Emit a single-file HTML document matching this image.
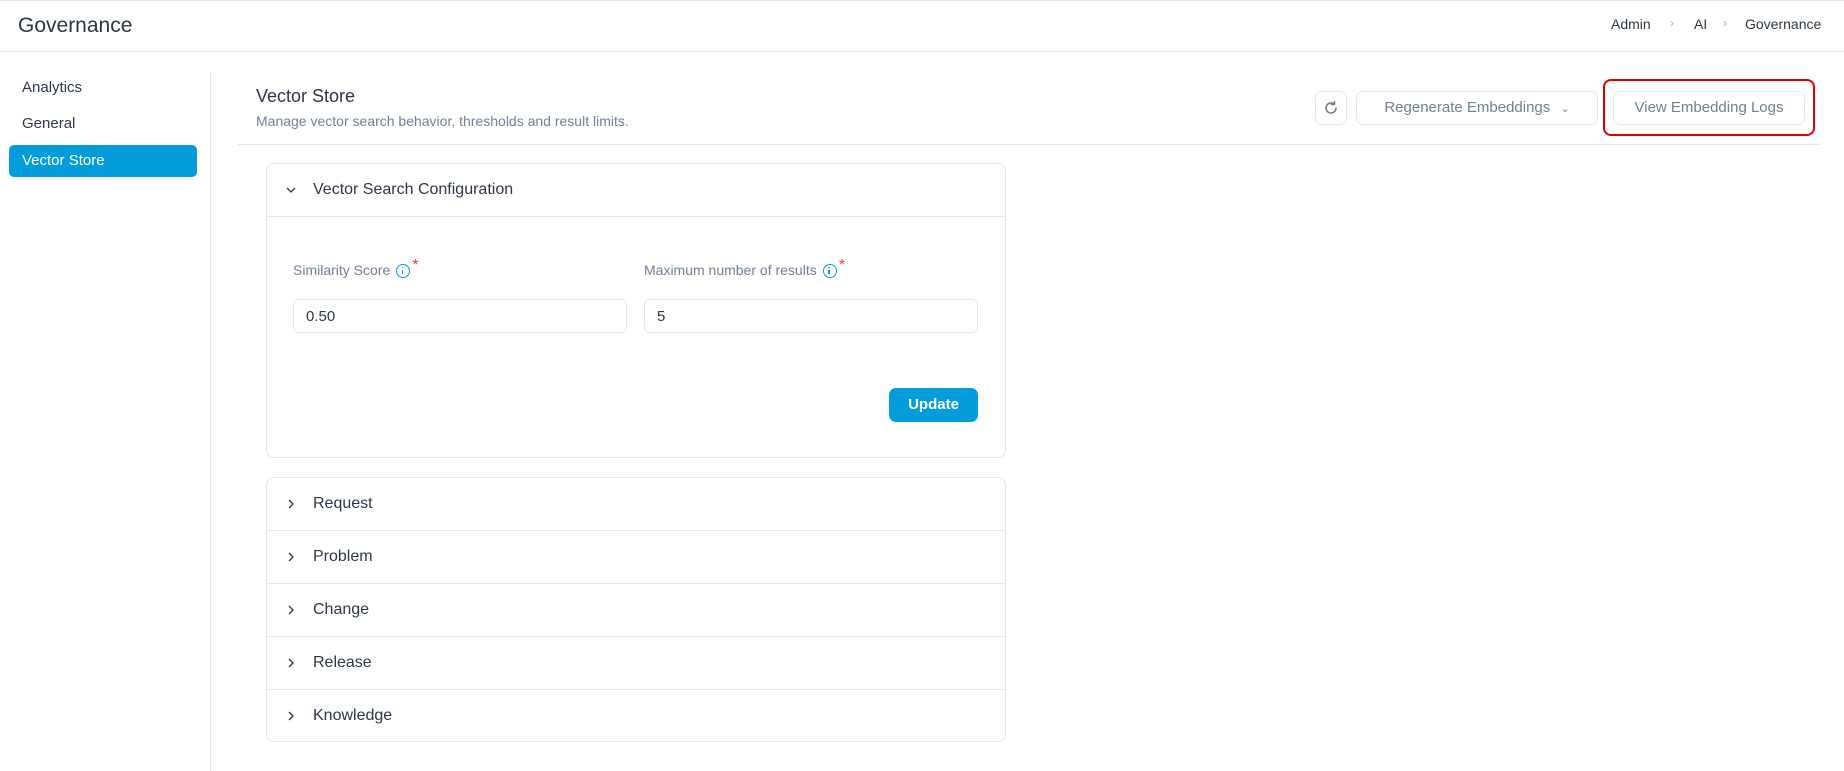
<!DOCTYPE html>
<html><head><meta charset="utf-8"><style>
*{box-sizing:border-box;margin:0;padding:0}
body{width:1844px;height:771px;background:#fff;font-family:"Liberation Sans",sans-serif;color:#2d3748;position:relative;overflow:hidden}
.a{position:absolute}
.hdr{left:0;top:0;width:1844px;height:52px;border-top:1px solid #e2e8f0;border-bottom:1px solid #e2e8f0}
.title{left:18px;top:14px;font-size:21px;color:#2d3748}
.bc{top:16px;font-size:14px;color:#2d3748}
.sep{top:16px;font-size:12px;color:#a0aec0}
.nav{left:22px;font-size:15px;color:#2d3748}
.navact{left:9px;top:145px;width:188px;height:32px;background:#039ddb;border-radius:5px;color:#fff;font-size:15px;padding:7px 0 0 13px}
.vline{left:210px;top:71px;width:1px;height:700px;background:#e2e8f0}
.btn{border:1px solid #e2e8f0;border-radius:7px;color:#718096;font-size:15px;text-align:center;line-height:32px;height:34px;top:91px}
.card{border:1px solid #e2e8f0;border-radius:8px}
.row{left:0;width:100%;height:53px;border-bottom:1px solid #e2e8f0;font-size:16px;color:#2d3748}
.row span{position:absolute;left:46px;top:17px}
.row svg{position:absolute;left:18px;top:20px}
.lbl{top:262px;font-size:14px;color:#718096}
.inp{top:299px;height:34px;border:1px solid #e2e8f0;border-radius:6px;font-size:15px;padding:8px 0 0 12px;color:#2d3748}
.info{display:inline-block;width:14px;height:14px;border:1.5px solid #039ddb;border-radius:50%;vertical-align:-3px;margin-left:6px;position:relative}
.info:after{content:"";position:absolute;left:4.5px;top:4.5px;width:1.5px;height:4.5px;background:#039ddb}
.info:before{content:"";position:absolute;left:4.5px;top:1.8px;width:1.5px;height:1.5px;background:#039ddb}
.star{color:#e53e3e;font-size:16px;position:relative;top:-5px;margin-left:2px}
</style></head><body>
<div class="a hdr"></div>
<div class="a title">Governance</div>
<div class="a bc" style="left:1611px">Admin</div>
<div class="a sep" style="left:1670px">&#x203A;</div>
<div class="a bc" style="left:1694px">AI</div>
<div class="a sep" style="left:1723px">&#x203A;</div>
<div class="a bc" style="left:1745px">Governance</div>

<div class="a nav" style="top:79px">Analytics</div>
<div class="a nav" style="top:115px">General</div>
<div class="a navact">Vector Store</div>
<div class="a vline"></div>

<div class="a" style="left:256px;top:86px;font-size:18px;color:#2d3748">Vector Store</div>
<div class="a" style="left:256px;top:113px;font-size:14px;color:#718096">Manage vector search behavior, thresholds and result limits.</div>
<div class="a" style="left:238px;top:144px;width:1582px;height:1px;background:#e2e8f0"></div>

<div class="a btn" style="left:1315px;width:32px">
<svg width="16" height="16" viewBox="0 0 16 16" style="margin-top:8px"><path d="M13 8a5 5 0 1 1-2-4" fill="none" stroke="#718096" stroke-width="1.6" stroke-linecap="round"/><path d="M11.5 1.5v3h-3" fill="none" stroke="#718096" stroke-width="1.6" stroke-linecap="round" stroke-linejoin="round"/></svg></div>
<div class="a btn" style="left:1356px;width:242px">Regenerate Embeddings <span style="font-size:11px;margin-left:6px">&#x2304;</span></div>
<div class="a btn" style="left:1613px;width:192px">View Embedding Logs</div>
<div class="a" style="left:1603px;top:79px;width:212px;height:57px;border:2px solid #e00000;border-radius:8px"></div>

<div class="a card" style="left:266px;top:163px;width:740px;height:295px">
<div class="a row" style="top:0"><svg width="12" height="12" viewBox="0 0 12 12"><path d="M2 4l4 4 4-4" fill="none" stroke="#2d3748" stroke-width="1.3"/></svg><span>Vector Search Configuration</span></div>
</div>
<div class="a lbl" style="left:293px">Similarity Score<span class="info"></span><span class="star">*</span></div>
<div class="a lbl" style="left:644px">Maximum number of results<span class="info"></span><span class="star">*</span></div>
<div class="a inp" style="left:293px;width:334px">0.50</div>
<div class="a inp" style="left:644px;width:334px">5</div>
<div class="a" style="left:889px;top:388px;width:89px;height:34px;background:#039ddb;border-radius:7px;color:#fff;font-size:15px;text-align:center;line-height:34px;font-weight:bold">Update</div>

<div class="a card" style="left:266px;top:477px;width:740px;height:265px;overflow:hidden">
<div class="a row" style="top:0"><svg width="12" height="12" viewBox="0 0 12 12"><path d="M4 2l4 4-4 4" fill="none" stroke="#2d3748" stroke-width="1.3"/></svg><span>Request</span></div>
<div class="a row" style="top:53px"><svg width="12" height="12" viewBox="0 0 12 12"><path d="M4 2l4 4-4 4" fill="none" stroke="#2d3748" stroke-width="1.3"/></svg><span>Problem</span></div>
<div class="a row" style="top:106px"><svg width="12" height="12" viewBox="0 0 12 12"><path d="M4 2l4 4-4 4" fill="none" stroke="#2d3748" stroke-width="1.3"/></svg><span>Change</span></div>
<div class="a row" style="top:159px"><svg width="12" height="12" viewBox="0 0 12 12"><path d="M4 2l4 4-4 4" fill="none" stroke="#2d3748" stroke-width="1.3"/></svg><span>Release</span></div>
<div class="a row" style="top:212px;border-bottom:none"><svg width="12" height="12" viewBox="0 0 12 12"><path d="M4 2l4 4-4 4" fill="none" stroke="#2d3748" stroke-width="1.3"/></svg><span>Knowledge</span></div>
</div>
</body></html>
